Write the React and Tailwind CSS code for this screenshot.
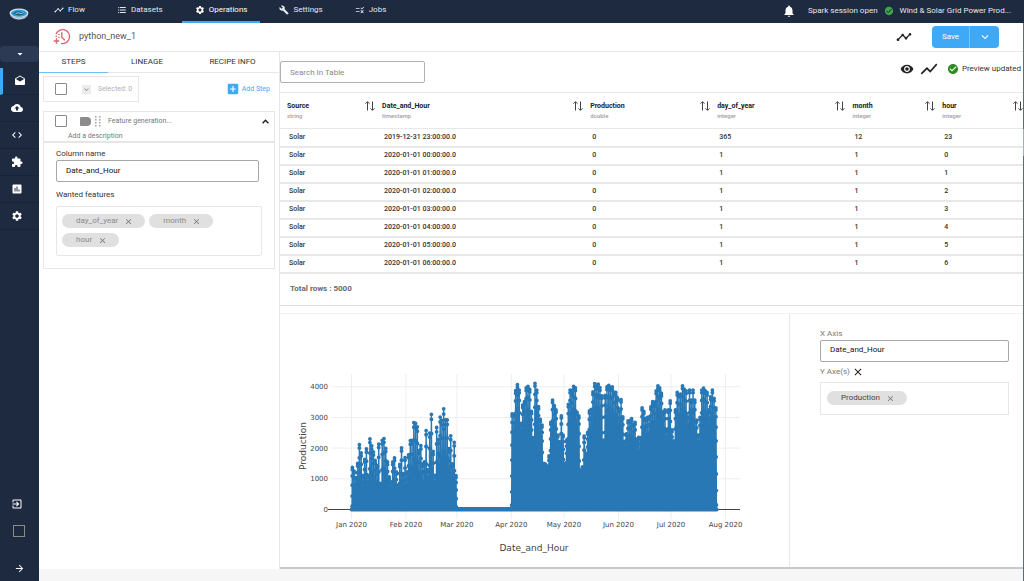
import { useState } from 'react';
import {
  MdAddBox,
  MdArrowDropDown,
  MdArrowForward,
  MdAssessment,
  MdBackup,
  MdBuild,
  MdCheckCircle,
  MdClose,
  MdCode,
  MdDrafts,
  MdExitToApp,
  MdExtension,
  MdFormatListBulleted,
  MdKeyboardArrowDown,
  MdNotifications,
  MdRule,
  MdSettings,
  MdShowChart,
  MdTimeline,
  MdVisibility,
} from 'react-icons/md';

const NAV = [
  { label: 'Flow', icon: MdTimeline },
  { label: 'Datasets', icon: MdFormatListBulleted },
  { label: 'Operations', icon: MdSettings, active: true },
  { label: 'Settings', icon: MdBuild },
  { label: 'Jobs', icon: MdRule },
];

const SIDE = [
  { label: 'Inbox', icon: MdDrafts, active: true },
  { label: 'Upload', icon: MdBackup },
  { label: 'Code', icon: MdCode },
  { label: 'Plugins', icon: MdExtension },
  { label: 'Reports', icon: MdAssessment },
  { label: 'Preferences', icon: MdSettings },
];

const COLUMNS = [
  { name: 'Source', type: 'string', width: 'w-[12.8%]' },
  { name: 'Date_and_Hour', type: 'timestamp', width: 'w-[28%]' },
  { name: 'Production', type: 'double', width: 'w-[17.1%]' },
  { name: 'day_of_year', type: 'integer', width: 'w-[18.2%]' },
  { name: 'month', type: 'integer', width: 'w-[12.1%]' },
  { name: 'hour', type: 'integer', width: 'w-[11.8%]' },
];

const ROWS = [
  ['Solar', '2019-12-31 23:00:00.0', '0', '365', '12', '23'],
  ['Solar', '2020-01-01 00:00:00.0', '0', '1', '1', '0'],
  ['Solar', '2020-01-01 01:00:00.0', '0', '1', '1', '1'],
  ['Solar', '2020-01-01 02:00:00.0', '0', '1', '1', '2'],
  ['Solar', '2020-01-01 03:00:00.0', '0', '1', '1', '3'],
  ['Solar', '2020-01-01 04:00:00.0', '0', '1', '1', '4'],
  ['Solar', '2020-01-01 05:00:00.0', '0', '1', '1', '5'],
  ['Solar', '2020-01-01 06:00:00.0', '0', '1', '1', '6'],
];

// highest production of each day, January and February
const WINTER = [
  1370, 1250, 1040, 1500, 2110, 1840, 1110, 1630, 1970, 1110, 2300, 2070, 1870, 1600, 1440, 2130,
  850, 2250, 2310, 1990, 1550, 1060, 900, 1550, 1680, 1220, 790, 1470, 2010, 1170, 1690, 1220, 1780,
  2240, 2250, 2830, 2800, 2690, 1920, 2080, 1490, 1550, 2570, 1300, 2490, 3100, 1890, 1110, 2670,
  2280, 3010, 2900, 3280, 2920, 2920, 1980, 2400, 1490, 2190, 1100,
];

// April to the end of July
const SUMMER = [
  3110, 3090, 3870, 4070, 3890, 2800, 3400, 3510, 3960, 4010, 3910, 3200, 2340, 4110, 3890, 3350,
  2930, 2750, 1500, 1480, 1340, 1750, 2840, 3560, 3380, 3240, 2420, 2210, 3050, 2420, 1500, 2260,
  3420, 3890, 3810, 4010, 3960, 3160, 3050, 1290, 1390, 2390, 1830, 2510, 3210, 3260, 3830, 4100,
  4010, 4080, 3970, 3700, 2260, 3720, 3990, 4040, 3960, 3990, 3810, 3810, 3640, 3270, 3580, 3020,
  2210, 2460, 2890, 2890, 2960, 2780, 2840, 2260, 2350, 2340, 3310, 3200, 2960, 3000, 3020, 3340,
  3510, 3420, 3860, 4030, 3960, 3780, 3180, 3240, 2590, 3240, 3540, 2590, 2230, 3240, 3810, 3750,
  3760, 4030, 3920, 3860, 3020, 3890, 3560, 3890, 3560, 2910, 2420, 3000, 3890, 3950, 3860, 3810,
  3240, 3670, 3890, 3620, 3310,
];

const MONTHS = [
  ['Jan 2020', 0],
  ['Feb 2020', 31],
  ['Mar 2020', 60],
  ['Apr 2020', 91],
  ['May 2020', 121],
  ['Jun 2020', 152],
  ['Jul 2020', 182],
  ['Aug 2020', 213],
];

const X = (day) => 71.5 + day * 1.756;
const Y = (value) => 195.5 - value * 0.0307;

function hourly(peaks, firstDay, daylight) {
  return peaks.flatMap((peak, i) =>
    Array.from({ length: 24 }, (_, h) => {
      const t = (h - 12) / daylight;
      const v = Math.abs(t) < 0.5 ? peak * Math.cos(Math.PI * t) ** 1.3 : 0;
      return `${X(firstDay + i + h / 24).toFixed(2)} ${Y(v).toFixed(1)}`;
    })
  );
}

const MARCH = Array.from({ length: 31 }, () => 0);

const POINTS = [
  ...hourly(WINTER, 0, 11),
  ...hourly(MARCH, 60, 12),
  ...hourly(SUMMER, 91, 17),
  `${X(208)} ${Y(0)}`,
];
const LINE = `M${POINTS.join('L')}`;
// zero-length segments with round caps draw the dots
const DOTS = POINTS.map((p) => `M${p}h0`).join('');

function ProductionChart() {
  return (
    <svg
      viewBox="0 0 509 253"
      className="block w-full font-['DejaVu_Sans',sans-serif]"
      role="img"
      aria-label="Production by Date_and_Hour"
    >
      <g stroke="#eeeeee" strokeWidth="1">
        {[1000, 2000, 3000, 4000].map((v) => (
          <line key={v} x1="51" x2="460" y1={Y(v)} y2={Y(v)} />
        ))}
        {MONTHS.map(([name, day]) => (
          <line key={name} x1={X(day)} x2={X(day)} y1="60" y2="205" />
        ))}
      </g>
      <line x1="48" x2="460" y1={Y(0)} y2={Y(0)} stroke="#444444" />
      <g fill="none" stroke="#2878b5" strokeLinecap="round" strokeLinejoin="round">
        <path d={LINE} strokeWidth="1.3" />
        <path d={DOTS} strokeWidth="3.8" />
      </g>
      <g fill="#444444" fontSize="7">
        {[0, 1000, 2000, 3000, 4000].map((v) => (
          <text key={v} x="48" y={Y(v) + 2.5} textAnchor="end">
            {v}
          </text>
        ))}
        {MONTHS.map(([name, day]) => (
          <text key={name} x={X(day)} y="213" textAnchor="middle">
            {name}
          </text>
        ))}
      </g>
      <g fill="#444444" fontSize="9" textAnchor="middle">
        <text x="254" y="237">Date_and_Hour</text>
        <text x="26" y="132" transform="rotate(-90 26 132)">Production</text>
      </g>
    </svg>
  );
}

function Logo() {
  return (
    <svg viewBox="0 0 20 14" className="h-[14px] w-5" aria-hidden="true">
      <ellipse cx="10" cy="7.4" rx="9" ry="5.2" fill="#8fa6b5" />
      <ellipse cx="10" cy="6" rx="9.5" ry="4.6" fill="#d6e2e8" />
      <ellipse cx="10" cy="6.2" rx="8" ry="3.5" fill="#2f9fd0" />
      <path d="M4 6.500q3-3 7-1.800t5 1.300q-2 2.600-6 2.400T4 6.500Z" fill="#1f5f86" />
      <path d="M6.500 6.800q2.500-1.800 4-.6t4-.6" fill="none" stroke="#8fdcf7" strokeWidth="1" />
      <path d="M4 10.500q6 3 12 0" fill="none" stroke="#cfd9df" strokeWidth="1" />
    </svg>
  );
}

function RecipeIcon() {
  return (
    <svg viewBox="0 0 18 18" className="h-[18px] w-[18px]" fill="none" stroke="#e0616d" aria-hidden="true">
      <path d="M3 6.200A7 7 0 1 1 8 15.400" strokeWidth="1.300" />
      <path d="M8.800 4.300v4.900l3 3" strokeWidth="1.300" />
      <path d="M3.500 10.200v5.600M.7 13h5.600" strokeWidth="1.400" />
      <path d="M2.500 8.300h1.400M5.300 6.500h1.400M5.300 9.300h1.400" strokeWidth="1.200" />
    </svg>
  );
}

function SortIcon() {
  return (
    <svg viewBox="0 0 10 10" className="h-[10px] w-[10px]" fill="none" stroke="#444" strokeWidth="1" aria-hidden="true">
      <path d="M2.500 9.500V.7M.5 2.700l2-2 2 2M7.500.5v8.800M5.500 7.300l2 2 2-2" />
    </svg>
  );
}

function Chip({ label, muted }) {
  return (
    <span
      className={`flex h-[14px] items-center gap-1.5 rounded-full bg-[#e0e0e0] pr-3 pl-[14px] ${
        muted ? 'text-[#8a8a8a]' : 'text-[#444]'
      }`}
    >
      {label}
      <button type="button" aria-label={`Remove ${label}`}>
        <MdClose className="h-[9px] w-[9px] text-[#777]" />
      </button>
    </span>
  );
}

function Checkbox({ label, className }) {
  return (
    <input
      type="checkbox"
      aria-label={label}
      className={`h-3 w-3 shrink-0 appearance-none border border-[#8a8a8a] checked:bg-[#3fa9f5] ${className}`}
    />
  );
}

function Sidebar() {
  return (
    <aside className="flex w-[39px] shrink-0 flex-col bg-[#1e2a40] text-white">
      <a href="#home" aria-label="Home" className="flex h-[46px] pt-[7px] pl-[9px]">
        <Logo />
      </a>
      <button type="button" aria-label="Switch project" className="mb-1.5 flex h-4 items-center justify-center rounded-sm bg-[#2c3a54]">
        <MdArrowDropDown className="h-3 w-3" />
      </button>
      {SIDE.map(({ label, icon: Icon, active }) => (
        <a
          key={label}
          href={`#${label.toLowerCase()}`}
          aria-label={label}
          className={`flex h-[27px] items-center border-b border-b-[#18233a] pl-[11px] ${
            active ? 'border-l-[3px] border-l-[#3fa9f5]' : ''
          }`}
        >
          <Icon className="h-3 w-3" />
        </a>
      ))}
      <div className="mt-auto flex flex-col items-start pb-[7px] pl-[11px]">
        <button type="button" aria-label="Sign out" className="mb-[15px]">
          <MdExitToApp className="h-3 w-3" />
        </button>
        <Checkbox label="Pin menu" className="mb-[26px] ml-[2px]" />
        <button type="button" aria-label="Expand menu" className="ml-[3px]">
          <MdArrowForward className="h-[11px] w-[11px]" />
        </button>
      </div>
    </aside>
  );
}

function TopBar() {
  return (
    <header className="flex h-[23px] shrink-0 bg-[#1e2a40] text-[#e4e7ec]">
      <nav className="flex gap-1.5 pl-0.5">
        {NAV.map(({ label, icon: Icon, active }) => (
          <a
            key={label}
            href={`#${label.toLowerCase()}`}
            className={`flex items-center gap-1 border-b-2 px-[13px] pb-px ${
              active ? 'border-[#3fa9f5] text-white' : 'border-transparent'
            }`}
          >
            <Icon className="h-[10px] w-[10px]" />
            {label}
          </a>
        ))}
      </nav>
      <div className="ml-auto flex items-center pr-[13px] pb-0.5">
        <MdNotifications className="mr-3 h-[14px] w-[14px] text-white" />
        Spark session open
        <MdCheckCircle className="mx-1.5 h-[10px] w-[10px] text-[#3fa648]" />
        Wind &amp; Solar Grid Power Prod...
      </div>
    </header>
  );
}

function TitleBar() {
  return (
    <div className="flex h-[29px] shrink-0 items-center border-b border-[#e8e8e8] bg-white pr-6 pl-[14px]">
      <RecipeIcon />
      <h1 className="ml-2 text-[9px] text-[#555]">python_new_1</h1>
      <MdTimeline className="mr-5 ml-auto h-4 w-4 text-[#222]" />
      <div className="flex h-[22px] overflow-hidden rounded-sm bg-[#3fa9f5] text-white">
        <button type="button" className="w-[38px] border-r border-[#7cc4f8]">Save</button>
        <button type="button" aria-label="More save options" className="flex w-[29px] items-center justify-center">
          <MdKeyboardArrowDown className="h-[14px] w-[14px]" />
        </button>
      </div>
    </div>
  );
}

function StepsPanel() {
  return (
    <section className="w-[241px] shrink-0 border-r border-[#e6e6e6] bg-white">
      <div className="flex h-[21px] border-b border-[#e8e8e8] text-[#333]">
        <button type="button" className="-mb-px w-[69px] border-b border-[#6fbdf5]">STEPS</button>
        <button type="button" className="w-[78px]">LINEAGE</button>
        <button type="button" className="flex-1">RECIPE INFO</button>
      </div>

      <div className="flex items-center justify-between pt-[3px] pr-[9px] pl-1">
        <div className="flex h-[26px] w-24 items-center border border-[#e6e6e6] pl-[11px] text-[7px] text-[#b0b0b0]">
          <Checkbox label="Select all steps" className="rounded-[1px]" />
          <button type="button" aria-label="Selection actions" className="mr-[7px] ml-[15px] bg-[#ececec]">
            <MdKeyboardArrowDown className="h-[9px] w-[9px] text-[#888]" />
          </button>
          Selected: 0
        </div>
        <button type="button" className="flex items-center gap-0.5 text-[7px] text-[#3fa9f5]">
          <MdAddBox className="h-[14px] w-[14px]" />
          Add Step
        </button>
      </div>

      <div className="mt-[9px] mr-1 ml-1 border border-[#e6e6e6]">
        <div className="h-[31px] border-b-2 border-[#e6e6e6] pr-[5px] pl-[11px]">
          <div className="flex h-[18px] items-center">
            <Checkbox label="Select step" className="rounded-[1px]" />
            <svg viewBox="0 0 11 9" className="ml-[13px] h-[9px] w-[11px]" fill="#8c8c8c" aria-hidden="true">
              <path d="M1 0h7.200q2.800 1 2.800 3v3q0 2-2.800 3H1a1 1 0 0 1-1-1V1a1 1 0 0 1 1-1Z" />
            </svg>
            <svg viewBox="0 0 6 11" className="ml-1 h-[11px] w-1.5" fill="#aaaaaa" aria-hidden="true">
              {[0, 3, 6, 9].map((y) => (
                <g key={y}>
                  <rect x="0" y={y} width="1.6" height="1.6" />
                  <rect x="4" y={y} width="1.6" height="1.6" />
                </g>
              ))}
            </svg>
            <span className="ml-[7px] text-[7px] text-[#777]">Feature generation...</span>
            <button type="button" aria-label="Collapse step" className="ml-auto">
              <svg viewBox="0 0 7 5" className="h-[5px] w-[7px]" fill="none" stroke="#222" strokeWidth="1.5" aria-hidden="true">
                <path d="M.6 4.200l2.900-2.900 2.900 2.900" />
              </svg>
            </button>
          </div>
          <p className="pl-[13px] text-[7px] leading-3 text-[#777]">Add a description</p>
        </div>
        <div className="pt-[5px] pr-3 pb-3 pl-3">
          <label htmlFor="column-name" className="block leading-3 text-[#333]">Column name</label>
          <input
            id="column-name"
            defaultValue="Date_and_Hour"
            className="block h-[22px] w-[203px] rounded-xs border border-[#a8a8a8] px-[9px] pb-0.5 text-[#111]"
          />
          <h2 className="mt-[7px] mb-[5px] leading-3 text-[#333]">Wanted features</h2>
          <div className="flex flex-wrap content-start gap-x-1 gap-y-[5px] rounded-xs border border-[#e6e6e6] px-[5px] pt-[7px] pb-2">
            <Chip label="day_of_year" muted />
            <Chip label="month" muted />
            <Chip label="hour" muted />
          </div>
        </div>
      </div>
    </section>
  );
}

function DataTable() {
  return (
    <table className="w-full table-fixed border-collapse border-t border-[#e8e8e8] text-left text-[7px] text-[#333]">
      <thead>
        <tr className="h-9 border-b border-[#e8e8e8]">
          {COLUMNS.map((col) => (
            <th key={col.name} className={`p-0 pl-[7px] ${col.width}`}>
              <div className="flex justify-between">
                <div className="leading-[10px]">
                  <div className="font-bold text-[#222]">{col.name}</div>
                  <div className="text-[6px] font-medium text-[#a0a0a0]">{col.type}</div>
                </div>
                <button type="button" aria-label={`Sort by ${col.name}`} className="self-start">
                  <SortIcon />
                </button>
              </div>
            </th>
          ))}
        </tr>
      </thead>
      <tbody>
        {ROWS.map((row) => (
          <tr key={row[1]} className="h-[18px] border-b-2 border-[#e8e8e8]">
            {row.map((cell, i) => (
              <td key={i} className="p-0 pl-[9px] font-medium">{cell}</td>
            ))}
          </tr>
        ))}
      </tbody>
    </table>
  );
}

function PreviewPanel() {
  const [search, setSearch] = useState('');

  return (
    <section className="flex min-w-0 flex-1 flex-col border-b-2 border-[#c8c8c8] bg-white">
      <div className="flex h-10 shrink-0 justify-between pt-[9px]">
        <input
          aria-label="Search In Table"
          placeholder="Search In Table"
          value={search}
          onChange={(e) => setSearch(e.target.value)}
          className="h-[22px] w-[145px] rounded-xs border border-[#b0b0b0] px-[9px] placeholder:text-[#888]"
        />
        <div className="flex h-4 items-center pr-0.5 text-[#333]">
          <button type="button" aria-label="Show preview" className="mr-[5px]">
            <MdVisibility className="h-[14px] w-[14px] text-[#222]" />
          </button>
          <button type="button" aria-label="Show chart" className="mr-2">
            <MdShowChart className="h-5 w-5 text-[#222]" />
          </button>
          <MdCheckCircle className="mr-[3px] h-3 w-3 text-[#2e8b1f]" />
          Preview updated
        </div>
      </div>

      <DataTable />

      <p className="flex h-8 shrink-0 items-center border-b border-[#dedede] pl-[10px] font-bold text-[#6a6a6a]">
        Total rows : 5000
      </p>

      <div className="mt-[7px] flex flex-1 border-t border-[#f2f2f2]">
        <div className="min-w-0 flex-1">
          <ProductionChart />
        </div>
        <div className="w-[234px] shrink-0 border-l border-[#e6e6e6] pt-[14px] pr-[14px] pl-[30px] text-[#777]">
          <label htmlFor="x-axis" className="block leading-3">X Axis</label>
          <input
            id="x-axis"
            defaultValue="Date_and_Hour"
            className="block h-[22px] w-full rounded-xs border border-[#a8a8a8] px-[9px] pb-0.5 text-[#111]"
          />
          <div className="flex h-5 items-center gap-0.5">
            Y Axe(s)
            <button type="button" aria-label="Clear Y axes">
              <MdClose className="h-3 w-3 text-[#222]" />
            </button>
          </div>
          <div className="flex h-[33px] items-center border border-[#e6e6e6] px-1.5">
            <Chip label="Production" />
          </div>
        </div>
      </div>
    </section>
  );
}

export default function App() {
  return (
    <div className="relative flex min-h-screen bg-[#f6f6f6] font-[Roboto,sans-serif] text-[8px]">
      <Sidebar />
      <div className="flex min-w-0 flex-1 flex-col">
        <TopBar />
        <div className="flex flex-1 flex-col border-r border-[#5d6b82] pb-3">
          <TitleBar />
          <div className="flex flex-1">
            <StepsPanel />
            <PreviewPanel />
          </div>
        </div>
      </div>
      {/* handle of the closed side drawer */}
      <div className="absolute top-[129px] right-0 h-[27px] w-px bg-[#6fbdf5]" />
    </div>
  );
}
